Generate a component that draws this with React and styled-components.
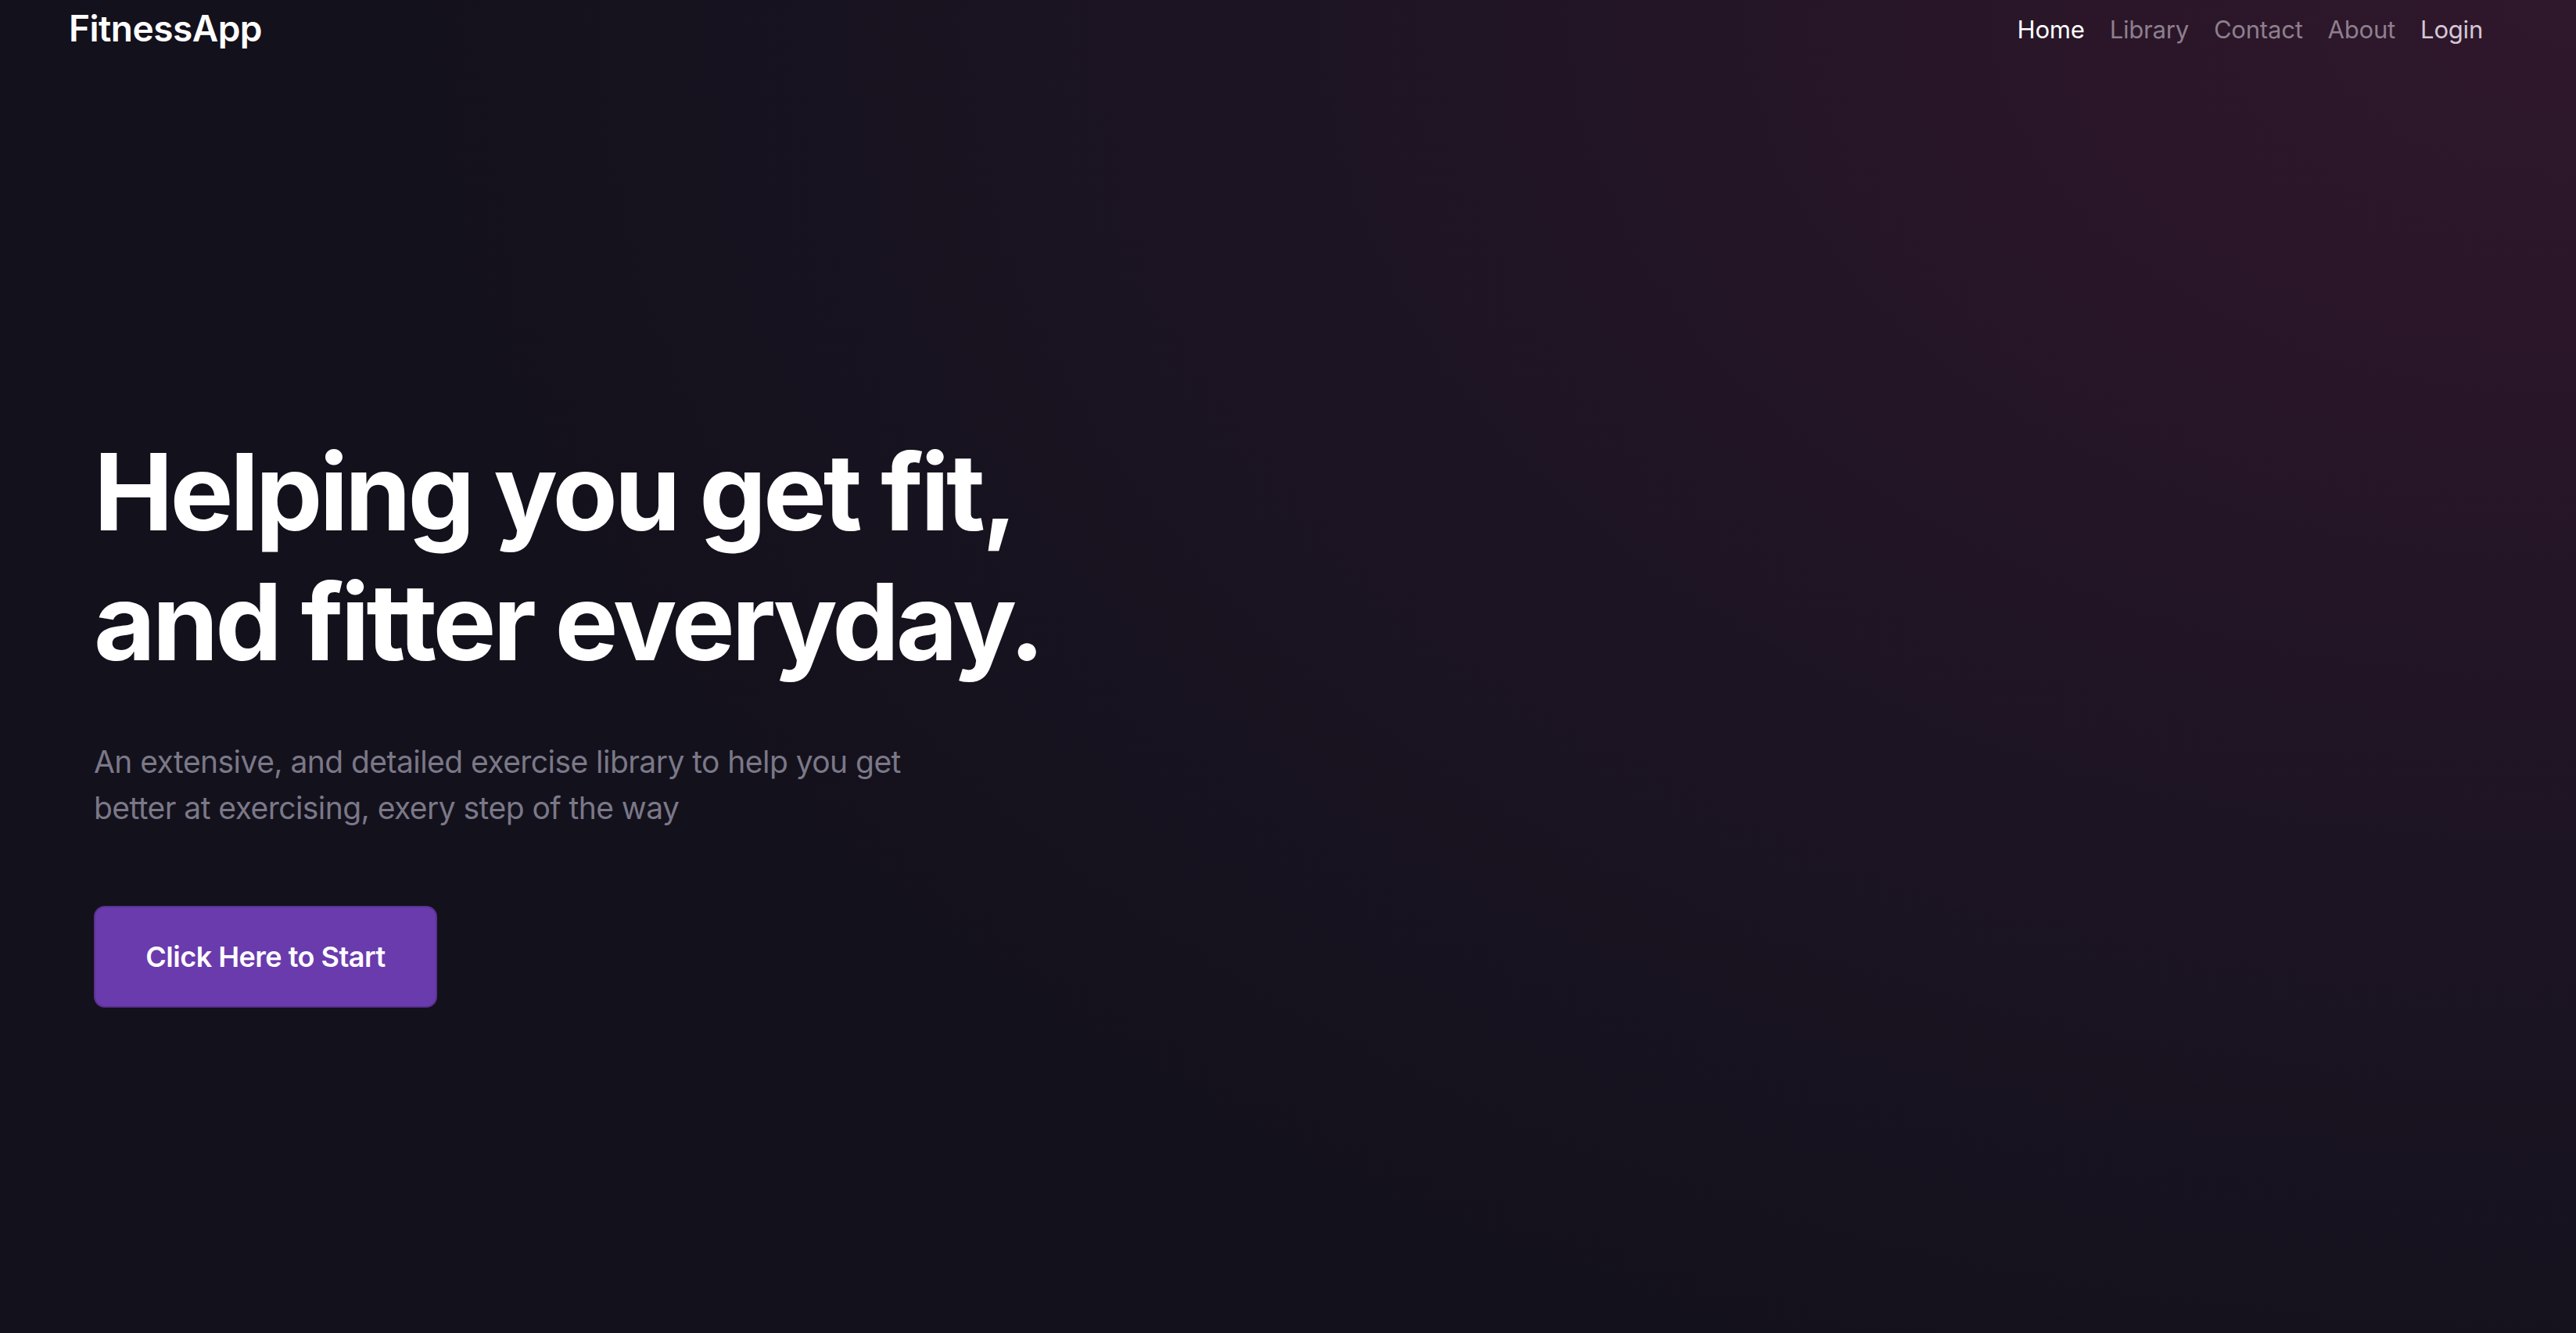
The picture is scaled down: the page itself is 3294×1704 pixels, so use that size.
import React from "react";
import styled, { createGlobalStyle } from "styled-components";

const GlobalStyle = createGlobalStyle`
  html, body { margin: 0; padding: 0; }
  body {
    background: #13111c;
    font-family: Inter, "Noto Sans", "Liberation Sans", sans-serif;
    -webkit-font-smoothing: antialiased;
  }
  * { box-sizing: border-box; }
`;

const Page = styled.div`
  min-height: 100vh;
  background:
    radial-gradient(ellipse 85% 110% at 100% 0%, #2f172c 0%, #2a1628 22%, #1d1423 58%, rgba(19,17,28,0) 100%),
    #13111c;
  color: #fff;
  display: flex;
  flex-direction: column;
`;

const NavBar = styled.nav`
  display: flex;
  align-items: center;
  justify-content: space-between;
  padding: 0 103px 0 88px;
  height: 74px;
`;

const Brand = styled.a`
  font-size: 46px;
  font-weight: 600;
  letter-spacing: -0.5px;
  color: #fff;
  text-decoration: none;
  margin-top: -2px;
`;

const NavList = styled.ul`
  display: flex;
  list-style: none;
  margin: 0;
  padding: 0;
`;

const NavLink = styled.a`
  display: block;
  padding: 0 16px;
  font-size: 31px;
  font-weight: 400;
  letter-spacing: -0.2px;
  color: ${(p) => p.$color};
  text-decoration: none;
`;

const Hero = styled.section`
  padding: 472px 0 0 120px;
  display: flex;
  flex-direction: column;
  align-items: flex-start;
`;

const Headline = styled.h1`
  margin: 0;
  font-size: 136px;
  line-height: 166px;
  font-weight: 700;
  letter-spacing: -4.2px;
  color: #fff;
`;

const Lead = styled.p`
  margin: 66px 0 0;
  max-width: 1080px;
  font-size: 39px;
  line-height: 59px;
  font-weight: 400;
  color: #7b7888;
  letter-spacing: -0.55px;
`;

const StartButton = styled.button`
  margin-top: 96px;
  width: 439px;
  height: 130px;
  background: #6a3bad;
  border: 2px solid #5a3292;
  border-radius: 14px;
  color: #fff;
  font-family: inherit;
  font-size: 36px;
  font-weight: 600;
  letter-spacing: -0.5px;
  cursor: pointer;
`;

const navItems = [
  { label: "Home", color: "#ffffff" },
  { label: "Library", color: "#8d7f8e" },
  { label: "Contact", color: "#8d7f8e" },
  { label: "About", color: "#8d7f8e" },
  { label: "Login", color: "#d4c8d4" },
];

export default function App() {
  return (
    <>
      <GlobalStyle />
      <Page>
        <NavBar>
          <Brand href="#">FitnessApp</Brand>
          <NavList>
            {navItems.map((n) => (
              <li key={n.label}>
                <NavLink href="#" $color={n.color}>{n.label}</NavLink>
              </li>
            ))}
          </NavList>
        </NavBar>
        <Hero>
          <Headline>
            Helping you get fit,
            <br />
            and fitter everyday.
          </Headline>
          <Lead>
            An extensive, and detailed exercise library to help you get better at exercising, exery step of the way
          </Lead>
          <StartButton>Click Here to Start</StartButton>
        </Hero>
      </Page>
    </>
  );
}
